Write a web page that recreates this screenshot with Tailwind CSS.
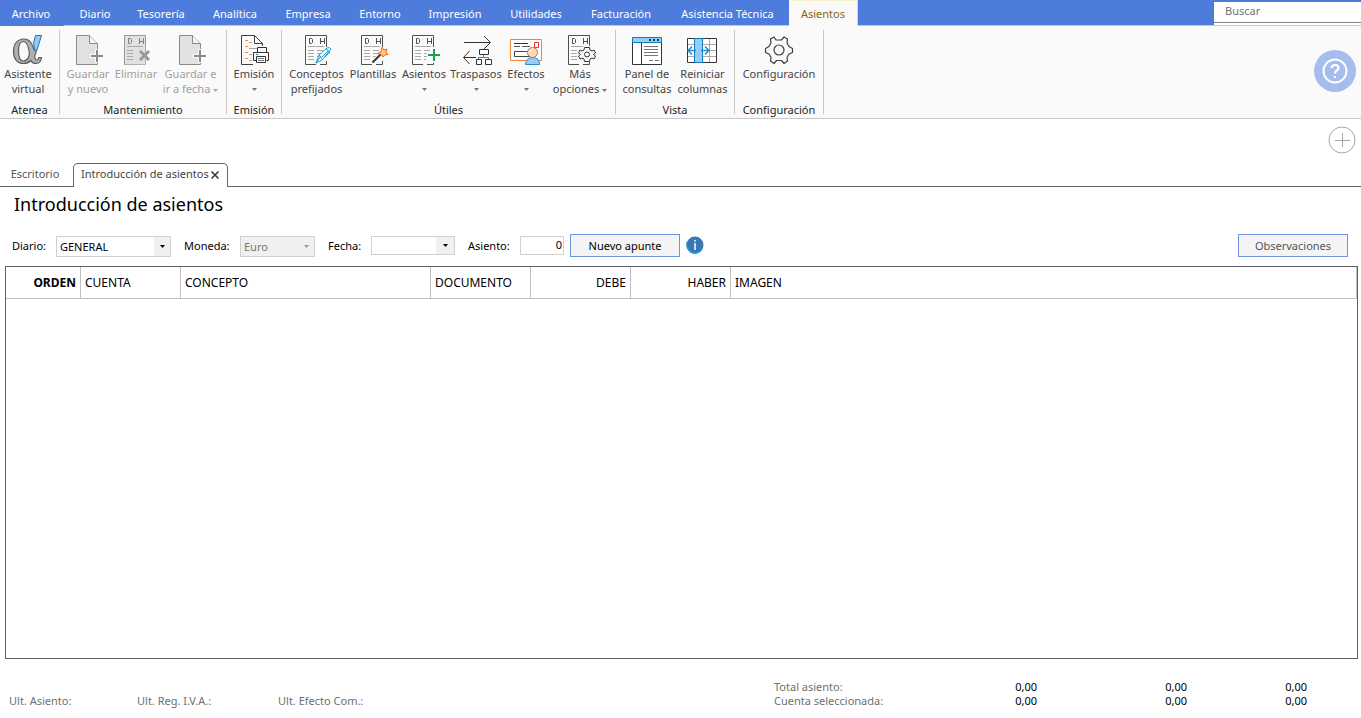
<!DOCTYPE html>
<html lang="es">
<head>
<meta charset="utf-8">
<meta name="viewport" content="width=device-width, initial-scale=1">
<title>Introducción de asientos</title>
<script src="https://cdn.jsdelivr.net/npm/@tailwindcss/browser@4"></script>
</head>
<body class="flex min-h-screen flex-col bg-white font-['Noto_Sans','Open_Sans',sans-serif] text-[11px] leading-[15px] text-[#444]">

<!-- Shared icon parts -->
<svg class="hidden" aria-hidden="true">
  <symbol id="newpage" viewBox="0 0 32 32">
    <path d="M4.500 1.500H17.500L25.500 9.500V30.500H4.500Z" fill="#e1e1e1" stroke="#8a8a8a"/>
    <path d="M17.500 1.500V9.500H25.500" fill="#f6f6f6" stroke="#8a8a8a"/>
    <path d="M25 15V29M18 22H32" stroke="#fafafa" stroke-width="4"/>
    <path d="M25 16V28M19 22H31" stroke="#8a8a8a" stroke-width="2"/>
  </symbol>
  <symbol id="ledger" viewBox="0 0 32 32">
    <path d="M15 30.500H4.500V1.500H25.500V13" fill="none" stroke="#505050"/>
    <path d="M25.500 27V30.500H19" fill="none" stroke="#505050"/>
    <path d="M8.500 4.500V9.500H10.500L11.500 8.500V5.500L10.500 4.500ZM19.500 4V10M23.500 4V10M19.500 7.500H23.500" fill="none" stroke="#505050"/>
    <path d="M7 12.500H23M7 16.500H13M7 19.500H13M7 22.500H13M7 25.500H13M16 16.500H22M16 19.500H21M16 22.500H20M16 25.500H18" stroke="#a8a8a8"/>
  </symbol>
</svg>

<header>
  <nav class="flex h-[26px] items-stretch bg-[#4e7cdc] text-white" aria-label="Menú principal">
    <button class="mr-[2px] w-[62px] pt-px">Archivo</button>
    <div class="flex grow items-stretch border-b border-[#c8c8c8]">
      <button class="ml-1 w-[54px] pt-px">Diario</button>
      <button class="w-[78px] pt-px">Tesorería</button>
      <button class="w-[70px] pt-px">Analítica</button>
      <button class="w-[76px] pt-px">Empresa</button>
      <button class="w-[68px] pt-px">Entorno</button>
      <button class="w-[82px] pt-px">Impresión</button>
      <button class="w-[80px] pt-px">Utilidades</button>
      <button class="w-[90px] pt-px">Facturación</button>
      <button class="w-[123px] pt-px">Asistencia Técnica</button>
      <button class="-mb-px w-[69px] border-t border-r border-t-[#fbf3d0] border-r-[#c8d4f0] bg-[#fafafa] text-[#8a6508]">Asientos</button>
      <div class="mt-[2px] ml-auto w-[147px] bg-white">
        <input type="text" aria-label="Buscar" placeholder="Buscar" class="block h-[21px] w-full border-b border-[#808080] bg-white pb-1 pl-[11px] text-[#666] outline-none placeholder:text-[#707070]">
      </div>
    </div>
  </nav>

  <div class="flex h-[93px] items-stretch border-b border-[#c8c8c8] bg-[#fafafa] pt-1 pb-1">
    <section class="flex w-[60px] flex-col border-r border-[#c8c8c8]">
      <div class="flex grow justify-center pr-[3px]">
        <button class="flex flex-col items-center pt-1">
          <svg class="size-8" viewBox="0 0 32 32">
            <path fill-rule="evenodd" d="M12 5C17 5 19.500 8 21 13L22.500 16.500H24.500Q24 19.500 22.500 22C23 25 23.500 26 25 26C26 26 26.500 25 26.800 23.500H29.500C29 27.500 27 29.500 24 29.500C21 29.500 19.500 28 18.800 26.500C17 28.500 14.500 29.500 11.500 29.500C5 29.500 1.500 24.500 1.500 17.500C1.500 10 5.500 5 12 5ZM11.500 7.500C8 7.500 6.500 11 6.500 17C6.500 23.500 8 27 11.500 27C14.500 27 16.500 24.500 17.500 20C16.500 12 15 7.500 11.500 7.500Z" fill="#b0b0b0" stroke="#5c5c5c" stroke-width="1.200"/>
            <path d="M23.500 1.500H29.500L25 16L23 17L21.500 9Z" fill="#93c9f2" stroke="#1679bd"/>
          </svg>
          <span>Asistente<br>virtual</span>
        </button>
      </div>
      <h2 class="-mb-[3px] text-center text-[#222]">Atenea</h2>
    </section>
    <section class="flex w-[167px] flex-col border-r border-[#c8c8c8]">
      <div class="flex grow pl-[2px] text-[#a0a0a0]">
        <button disabled class="flex w-[52px] flex-col items-center pt-1">
          <svg class="size-8"><use href="#newpage"/></svg>
          <span class="whitespace-nowrap">Guardar<br>y nuevo</span>
        </button>
        <button disabled class="flex w-[44px] flex-col items-center pt-1">
          <svg class="size-8" viewBox="0 0 32 32" fill="none">
            <path d="M4.500 1.500H25.500V30.500H4.500Z" fill="#e1e1e1" stroke="#b0b0b0"/>
            <path d="M4.500 30.500V1.500H25.500V12" stroke="#999"/>
            <path d="M8.500 4.500V9.500H10.500L11.500 8.500V5.500L10.500 4.500ZM19.500 4V10M23.500 4V10M19.500 7.500H23.500" stroke="#808080"/>
            <path d="M7 12.500H23M7 16.500H13M7 19.500H13M7 22.500H13M7 25.500H13" stroke="#a8a8a8"/>
            <path d="M20 17L29 26M29 17L20 26" stroke="#999" stroke-width="3"/>
          </svg>
          <span>Eliminar</span>
        </button>
        <button disabled class="flex w-[65px] flex-col items-center pt-1">
          <svg class="size-8"><use href="#newpage"/></svg>
          <span class="whitespace-nowrap">Guardar e<br>ir a fecha <svg class="inline h-[3px] w-[5px]" viewBox="0 0 5 3"><path d="M0 0H5L2.500 3Z" fill="#aaa"/></svg></span>
        </button>
      </div>
      <h2 class="-mb-[3px] text-center text-[#222]">Mantenimiento</h2>
    </section>
    <section class="flex w-[55px] flex-col border-r border-[#c8c8c8]">
      <div class="flex grow justify-center">
        <button class="flex flex-col items-center pt-1">
          <svg class="size-8" viewBox="0 0 32 32" fill="none">
            <path d="M15 30.500H3.500V1.500H16.500L24.500 9.500V12M16.500 1.500V9.500H24.500" stroke="#404040"/>
            <path d="M7 6.500H10M7 12.500H10M7 18.500H10M7 24.500H10" stroke="#f0951e"/>
            <path d="M11 8.500H14M11 14.500H19M11 20.500H14M11 26.500H14" stroke="#aaa"/>
            <path d="M19.500 18V13.500H28.500V18M18.500 26.500H15.500V18.500H30.500V26.500H28.500" fill="#fafafa" stroke="#333"/>
            <path d="M18.500 22.500H27.500V28.500H18.500Z" fill="#fff" stroke="#333"/>
            <path d="M20 24.500H26M20 26.500H26" stroke="#777"/><path d="M18 20.500H20" stroke="#1780c8"/>
          </svg>
          <span>Emisión</span>
          <svg class="mt-[7px] h-[3px] w-[5px]" viewBox="0 0 5 3"><path d="M0 0H5L2.500 3Z" fill="#777"/></svg>
        </button>
      </div>
      <h2 class="-mb-[3px] text-center text-[#222]">Emisión</h2>
    </section>
    <section class="flex w-[334px] flex-col border-r border-[#c8c8c8]">
      <div class="flex grow pl-1">
        <button class="flex w-[61px] flex-col items-center pt-1">
          <svg class="size-8" viewBox="0 0 32 32" fill="none">
            <use href="#ledger" width="32" height="32"/>
            <path d="M15 29L18 21L26 14Q29 13 30 15L21 26Z" fill="#fff" stroke="#1c9bd8"/>
            <path d="M15 29L20 22M18 21L21 25M25 15L29 18L24 23M27 17L21 23" stroke="#1c9bd8"/>
          </svg>
          <span>Conceptos<br>prefijados</span>
        </button>
        <button class="flex w-[52px] flex-col items-center pt-1">
          <svg class="size-8" viewBox="0 0 32 32" fill="none">
            <use href="#ledger" width="32" height="32"/>
            <path d="M15 29L25 19" stroke="#fafafa" stroke-width="4"/><path d="M15.500 28.500L24 20" stroke="#333" stroke-width="2"/>
            <path d="M25 13.500L27 16L30 15L29 18L31 20.500L27.500 21L26 23L24.500 20.500L21 19.500L24 17.500Z" fill="#ffc779" stroke="#e06d28"/>
          </svg>
          <span>Plantillas</span>
        </button>
        <button class="flex w-[50px] flex-col items-center pt-1">
          <svg class="size-8" viewBox="0 0 32 32" fill="none">
            <use href="#ledger" width="32" height="32"/>
            <path d="M26 14V29M19 21H32" stroke="#fafafa" stroke-width="5"/>
            <path d="M26 15V27M20 21H32" stroke="#16a34a" stroke-width="2"/>
          </svg>
          <span>Asientos</span>
          <svg class="mt-[7px] h-[3px] w-[5px]" viewBox="0 0 5 3"><path d="M0 0H5L2.500 3Z" fill="#777"/></svg>
        </button>
        <button class="flex w-[54px] flex-col items-center pt-1">
          <svg class="size-8" viewBox="0 0 32 32" fill="none">
            <path d="M4 8.500H30M24 2L30.500 8.500L24 15M3.500 23.500H16M9.500 17L3.500 23.500L9.500 30" stroke="#333"/>
            <path d="M23.500 20V23.500M18.500 26V23.500H28.500V26" stroke="#1c8fd0"/>
            <path d="M19.500 15.500H28.500V20.500H19.500ZM16.500 25.500H21.500V30.500H16.500ZM25.500 25.500H31.500V30.500H25.500Z" fill="#fff" stroke="#333"/>
          </svg>
          <span>Traspasos</span>
          <svg class="mt-[7px] h-[3px] w-[5px]" viewBox="0 0 5 3"><path d="M0 0H5L2.500 3Z" fill="#777"/></svg>
        </button>
        <button class="flex w-[46px] flex-col items-center pt-1">
          <svg class="size-8" viewBox="0 0 32 32" fill="none">
            <path d="M.500 5.500H31.500V26.500H.500Z" fill="#fff" stroke="#ee8637"/>
            <path d="M4 9.500H18" stroke="#333"/><path d="M4 12.500H10M12 12.500H20" stroke="#555"/>
            <path d="M4.500 17.500H20.500V22.500H4.500Z" stroke="#444"/>
            <path d="M24.500 8.500H28.500V13.500H24.500Z" stroke="#ef3030"/>
            <path d="M15.500 30.500Q16 23.500 22.500 23.500Q29.500 23.500 29.500 30.500Z" fill="#9bcdf3" stroke="#2a8aca"/>
            <circle cx="22.500" cy="18.500" r="5" fill="#ffdcb8" stroke="#a9774e"/>
          </svg>
          <span>Efectos</span>
          <svg class="mt-[7px] h-[3px] w-[5px]" viewBox="0 0 5 3"><path d="M0 0H5L2.500 3Z" fill="#777"/></svg>
        </button>
        <button class="flex w-[62px] flex-col items-center pt-1">
          <svg class="size-8" viewBox="0 0 32 32" fill="none">
            <use href="#ledger" width="32" height="32"/>
            <circle cx="23" cy="20" r="8.500" fill="#fafafa"/>
            <path d="M20.500 13.500H25.500L26 16L28 17L30 16L31.500 19L29.500 20.500L31.500 22L30 25L28 24L26 25L25.500 27.500H20.500L20 25L18 24L16 25L14.500 22L16.500 20.500L14.500 19L16 16L18 17L20 16Z" fill="#fafafa" stroke="#333"/>
            <circle cx="23" cy="20.500" r="2.500" stroke="#333"/>
          </svg>
          <span class="whitespace-nowrap">Más<br>opciones <svg class="inline h-[3px] w-[5px]" viewBox="0 0 5 3"><path d="M0 0H5L2.500 3Z" fill="#777"/></svg></span>
        </button>
      </div>
      <h2 class="-mb-[3px] text-center text-[#222]">Útiles</h2>
    </section>
    <section class="flex w-[119px] flex-col border-r border-[#c8c8c8]">
      <div class="flex grow pl-[3px]">
        <button class="flex w-[56px] flex-col items-center pt-1">
          <svg class="size-8" viewBox="0 0 32 32" fill="none">
            <path d="M1.500 8.500H30.500V30.500H1.500Z" fill="#fff" stroke="#333"/>
            <path d="M1.500 3.500H30.500V8.500H1.500Z" fill="#94cdf5" stroke="#1279bc"/>
            <path d="M18 6H20M22 6H24M26 6H28" stroke="#1d3d58" stroke-width="2"/>
            <path d="M10.500 9V30" stroke="#333"/>
            <path d="M13 12.500H27M13 15.500H27M13 18.500H27M13 21.500H27M18 26.500H22M24 26.500H28" stroke="#777"/>
          </svg>
          <span class="whitespace-nowrap">Panel de<br>consultas</span>
        </button>
        <button class="flex w-[55px] flex-col items-center pt-1">
          <svg class="size-8" viewBox="0 0 32 32" fill="none">
            <path d="M.500 4.500H29.500V28.500H.500Z" fill="#fff" stroke="#333"/>
            <path d="M1 10.500H29M1 16.500H29M1 22.500H29M22.500 5V28" stroke="#aaa"/>
            <path d="M7.500 4.500H15.500V28.500H7.500Z" fill="#94cdf5" stroke="#1279bc"/>
            <path d="M9 16.500H1M5 12.500L1 16.500L5 20.500M14 16.500H22M18 12.500L22 16.500L18 20.500" stroke="#1c8fd8" stroke-width="1.500"/>
          </svg>
          <span class="whitespace-nowrap">Reiniciar<br>columnas</span>
        </button>
      </div>
      <h2 class="-mb-[3px] text-center text-[#222]">Vista</h2>
    </section>
    <section class="flex w-[89px] flex-col border-r border-[#c8c8c8]">
      <div class="flex grow justify-center">
        <button class="flex flex-col items-center pt-1">
          <svg class="size-8" viewBox="0 0 32 32" fill="none" stroke="#404040" stroke-width="1.200">
            <path d="M13 6L11 3L7.500 5L8 9L6 12.500L2.500 14.500V18.500L6 20L8 23.500L7.500 27L11 29.500L13.500 26.500H18.500L21 29.500L24.500 27L24 23.500L26 20L29.500 18.500V14.500L26 12.500L24 9L24.500 5L21 3L18.500 6Z" stroke-linejoin="round"/>
            <circle cx="16" cy="16" r="5"/>
          </svg>
          <span>Configuración</span>
        </button>
      </div>
      <h2 class="-mb-[3px] text-center text-[#222]">Configuración</h2>
    </section>
    <button aria-label="Ayuda" class="mt-5 mr-[5px] ml-auto flex size-[42px] items-center justify-center rounded-full bg-[#a6bcee]">
      <svg class="size-[26px]" viewBox="0 0 26 26" fill="none" stroke="#fff" stroke-width="2">
        <circle cx="13" cy="13" r="11.500"/><path d="M9.500 10Q10 7 13 7Q16.500 7 16.500 10C16.500 12.500 13 12.500 13 15.500M13 18V20" stroke-width="2.200"/>
      </svg>
    </button>
  </div>
</header>

<div class="flex justify-end pt-[7px] pr-[5px]">
  <button aria-label="Añadir">
    <svg class="block size-[28px]" viewBox="0 0 28 28" fill="none" stroke="#a6a6a6"><circle cx="14" cy="14" r="13"/><path d="M14.500 7V21M7 14.500H22"/></svg>
  </button>
</div>
<div class="mt-[9px] flex h-6 items-end border-b border-[#666]" role="tablist">
  <button role="tab" class="w-[73px] pr-[3px] pb-[5px] text-[#555]">Escritorio</button>
  <div class="-mb-px flex h-6 w-[155px] items-center rounded-t-[5px] border border-b-0 border-[#666] bg-white pb-1 pl-[7px]">
    <button role="tab" aria-selected="true" class="whitespace-nowrap">Introducción de asientos</button>
    <button aria-label="Cerrar" class="mt-[2px] ml-[2px]"><svg class="block size-2" viewBox="0 0 8 8"><path d="M.500.500L7.500 7.500M7.500.500L.500 7.500" stroke="#333" stroke-width="1.500"/></svg></button>
  </div>
</div>

<main class="flex grow flex-col">
  <h1 class="mt-[3px] pl-[14px] text-[18px] leading-7 text-black">Introducción de asientos</h1>
  <form class="mt-[15px] flex h-6 items-center pl-3 pr-[13px] text-black">
    <label for="diario" class="w-11">Diario:</label>
    <div class="relative mt-[2px] w-[115px]">
      <select id="diario" class="block h-[21px] w-full appearance-none border border-[#d0d0d0] bg-white pl-[3px]"><option>GENERAL</option></select>
      <span class="pointer-events-none absolute inset-y-px right-px flex w-4 items-center justify-center bg-[#f0f0f0]"><svg class="h-[3px] w-[5px]" viewBox="0 0 5 3"><path d="M0 0H5L2.500 3Z"/></svg></span>
    </div>
    <label for="moneda" class="ml-[13px] w-14">Moneda:</label>
    <div class="relative mt-[2px] w-[75px]">
      <select id="moneda" disabled class="block h-[21px] w-full appearance-none border border-[#d0d0d0] bg-[#f0f0f0] pl-[3px] text-[#777] opacity-100"><option>Euro</option></select>
      <span class="pointer-events-none absolute inset-y-px right-px flex w-4 items-center justify-center"><svg class="h-[3px] w-[5px]" viewBox="0 0 5 3"><path d="M0 0H5L2.500 3Z" fill="#999"/></svg></span>
    </div>
    <label for="fecha" class="ml-[13px] w-[43px]">Fecha:</label>
    <div class="relative w-[84px]">
      <select id="fecha" class="block h-[19px] w-full appearance-none border border-[#d0d0d0] bg-white pl-[3px]"><option></option></select>
      <span class="pointer-events-none absolute inset-y-px right-px flex w-[18px] items-center justify-center bg-[#f0f0f0]"><svg class="h-[3px] w-[5px]" viewBox="0 0 5 3"><path d="M0 0H5L2.500 3Z"/></svg></span>
    </div>
    <label for="asiento" class="ml-[13px] w-[52px]">Asiento:</label>
    <input id="asiento" type="text" value="0" class="h-[19px] w-11 border border-[#d0d0d0] bg-white pr-px pb-[2px] text-right">
    <button type="button" class="ml-[6px] h-[23px] w-[110px] border border-[#6f94e0] bg-[#f4f4f4]">Nuevo apunte</button>
    <button type="button" aria-label="Información" class="ml-[6px]"><svg class="block size-[18px]" viewBox="0 0 18 18"><circle cx="9" cy="9" r="8.500" fill="#3a78b5"/><path d="M2 5A8 8 0 0 0 16 13" fill="none" stroke="#1c9bd0" stroke-width="1.500"/><path d="M9 7V14M9 4V5.500" stroke="#fff" stroke-width="1.500"/></svg></button>
    <button type="button" class="ml-auto h-[23px] w-[110px] border border-[#6f94e0] bg-[#f4f4f4] text-[#555]">Observaciones</button>
  </form>

  <div class="mt-[9px] mr-[3px] ml-[5px] grow border border-[#606060]">
    <table class="w-full table-fixed border-separate border-spacing-0 text-[12px] text-black">
      <thead>
        <tr class="text-left [&>th]:h-8 [&>th]:border-r [&>th]:border-b [&>th]:border-[#c0c0c0] [&>th]:px-1 [&>th]:py-0">
          <th class="w-[75px] text-right font-bold">ORDEN</th>
          <th class="w-[100px] font-normal">CUENTA</th>
          <th class="w-[250px] font-normal">CONCEPTO</th>
          <th class="w-[100px] font-normal">DOCUMENTO</th>
          <th class="w-[100px] text-right font-normal">DEBE</th>
          <th class="w-[100px] text-right font-normal">HABER</th>
          <th class="font-normal">IMAGEN</th>
        </tr>
      </thead>
      <tbody></tbody>
    </table>
  </div>
</main>

<footer class="flex h-[59px] items-end pb-[10px] pl-[9px] leading-[14px] text-[#707070]">
  <div class="w-32">Ult. Asiento:</div>
  <div class="w-[141px]">Ult. Reg. I.V.A.:</div>
  <div class="grow">Ult. Efecto Com.:</div>
  <table class="mr-[54px] w-[533px] table-fixed">
    <tbody>
      <tr><th class="w-[163px] p-0 text-left font-normal">Total asiento:</th><td class="w-[100px] p-0 text-right text-black">0,00</td><td class="w-[150px] p-0 text-right text-black">0,00</td><td class="w-[120px] p-0 text-right text-black">0,00</td></tr>
      <tr><th class="p-0 text-left font-normal">Cuenta seleccionada:</th><td class="p-0 text-right text-black">0,00</td><td class="p-0 text-right text-black">0,00</td><td class="p-0 text-right text-black">0,00</td></tr>
    </tbody>
  </table>
</footer>
</body>
</html>
